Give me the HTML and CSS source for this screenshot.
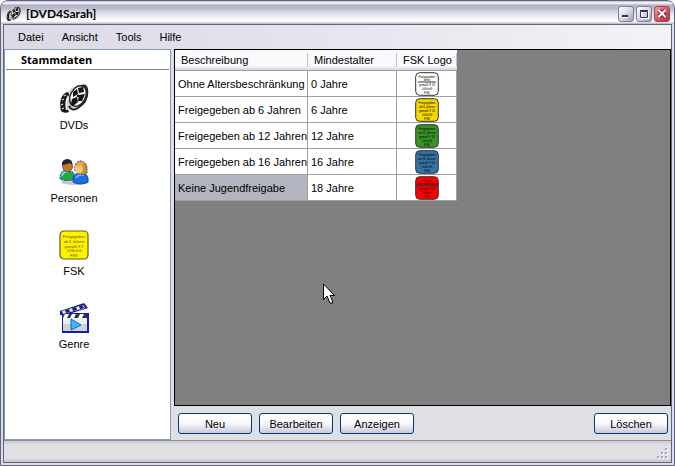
FILE: index.html
```html
<!DOCTYPE html>
<html lang="de">
<head>
<meta charset="utf-8">
<title>DVD4Sarah</title>
<link rel="stylesheet" href="styles.css">
</head>
<body>
<div class="window">
  <header class="titlebar">
    <svg class="app-icon" viewBox="0 0 32 32" aria-hidden="true"><use href="#reel"/></svg>
    <h1 class="title">[DVD4Sarah]</h1>
    <div class="captions">
      <button class="caption" aria-label="Minimieren"><svg viewBox="0 0 14 14"><path d="M4 9h5v2H4z" fill="#fff"/><path d="M3 8h6v2H3z" fill="#34344c"/></svg></button>
      <button class="caption" aria-label="Maximieren"><svg viewBox="0 0 14 14"><path d="M4 4h7v7H4z" fill="none" stroke="#fff" stroke-width="2"/><path d="M3.5 4.5h7v6h-7zM3 3.5h8" fill="none" stroke="#34344c"/></svg></button>
      <button class="caption caption-close" aria-label="Schließen"><svg viewBox="0 0 14 14"><path d="M4 3.5l6 6m0-6l-6 6" stroke="#7a2030" stroke-width="4"/><path d="M3.5 3l7 7m0-7l-7 7" stroke="#fff" stroke-width="2"/></svg></button>
    </div>
  </header>
  <div class="client">
    <nav class="menu" aria-label="Menü">
      <button>Datei</button><button>Ansicht</button><button>Tools</button><button>Hilfe</button>
    </nav>
    <div class="main">
      <aside class="sidebar">
        <h2>Stammdaten</h2>
        <ul>
          <li><a href="#dvds">
            <svg viewBox="0 0 32 32" aria-hidden="true">
              <g id="reel">
                <path d="M2 17Q3 9 11 8Q14 2 23 2Q30 2 30 9Q30 20 22 24Q17 27 12 25Q12 28 8 30L3 28Q1 23 2 17" fill="#d8d8d8"/>
                <path d="M3 28Q0 14 9 9Q12 10 11 15Q7 23 11 29Q6 31 3 28" fill="#161616"/>
                <path d="M8 27Q6 18 10 12Q12 14 10 18Q8 23 10 27z" fill="#f4f4f4"/>
                <path d="M4 26l2-1M3 22l2-1M4 17l2-1M6 13l2-1" fill="none" stroke="#ddd" stroke-width="1.2"/>
                <path d="M11 23Q14 29 20 25Q31 18 29 6Q28 1 23 3" fill="none" stroke="#222" stroke-width="2"/>
                <ellipse cx="20" cy="13" rx="7.5" ry="11" transform="rotate(28 20 13)" fill="#f4f4f4" stroke="#252525" stroke-width="1.5"/>
                <path d="M20 5l5-1 1 5-5 1zM15 9l4-3 1 5-5 3zM21 12l6-1-3 7-4 0zM14 16l5-2 1 5-5 4-2-2z" fill="#111"/>
                <circle cx="20" cy="13" r="1.2"/>
              </g>
            </svg><span>DVDs</span></a></li>
          <li><a href="#personen">
            <svg viewBox="0 0 32 32" aria-hidden="true">
              <ellipse cx="17" cy="26" rx="14" ry="3" fill="#c4c6cc"/>
              <path d="M2 23Q2 14 9 14Q17 14 17 23Q9 26 2 23" fill="#22aa3c" stroke="#2336c4" stroke-dasharray="2 1"/>
              <path d="M4 20Q5 15 10 16" fill="none" stroke="#80e488" stroke-width="2"/>
              <ellipse cx="9.500" cy="10" rx="5" ry="6" fill="#c47824" stroke="#2336c4" stroke-width=".7"/>
              <path d="M4 9Q3 4 9 3Q15 3 14 9L12 7Q8 9 4 9" fill="#26262a"/>
              <path d="M15 26Q14 17 23 17Q31 17 30 26Q22 30 15 26" fill="#1670dc" stroke="#2336c4"/>
              <path d="M18 22Q20 18 26 19" fill="none" stroke="#68b5ff" stroke-width="2"/>
              <path d="M17 15Q16 5 23 5Q30 6 29 17Q25 20 20 17" fill="#d88c18" stroke="#2336c4" stroke-dasharray="2 1"/>
              <ellipse cx="21" cy="12.500" rx="4" ry="5" fill="#ffc780"/>
              <path d="M17 10Q20 4 26 7Q25 10 17 11" fill="#f0ad30"/>
            </svg><span>Personen</span></a></li>
          <li><a href="#fsk">
            <svg viewBox="0 0 32 32" aria-hidden="true">
              <rect x="2" y="2" width="28" height="28" rx="4" fill="#fff200" stroke="#665f12" stroke-width="1.200"/>
              <g class="seal-text"><text x="16" y="9">Freigegeben</text><text x="16" y="14">ab 6 Jahren</text><text x="16" y="19">gemäß § 7</text><text x="16" y="23">JÖSchG</text><text x="16" y="28">FSK</text></g>
            </svg><span>FSK</span></a></li>
          <li><a href="#genre">
            <svg viewBox="0 0 32 32" aria-hidden="true">
              <path d="M2 9L26 1 30 6 14 11H31V31H4V13H2Z" fill="#111cba"/>
              <path d="M4 9L25 3 27 6 5 12Z" fill="#e8e8e8"/>
              <path d="M7 8l4-1 1 3-4 1zM14 6l4-1 1 3-4 1zM21 4l3-1 2 3-4 1z" fill="#26262b"/>
              <path d="M5 12h24v17H5z" fill="#eceff3"/>
              <path d="M5 12h24v4H5z" fill="#333"/>
              <path d="M7 12h4l-2 4H5zM14 12h4l-2 4h-4zM22 12h4l-2 4h-4z" fill="#fff"/>
              <path d="M5 22h24v7H5z" fill="#cfd3d9"/>
              <path d="M13 17l10 6-10 5z" fill="#4ab4ff" stroke="#0865cb"/>
            </svg><span>Genre</span></a></li>
        </ul>
      </aside>
      <section class="content">
        <div class="grid-area">
          <table>
            <colgroup><col class="col-text"><col class="col-age"><col class="col-logo"></colgroup>
            <thead><tr><th scope="col"><span>Beschreibung</span></th><th scope="col"><span>Mindestalter</span></th><th scope="col"><span>FSK Logo</span></th></tr></thead>
            <tbody>
              <tr><td>Ohne Altersbeschränkung</td><td>0 Jahre</td><td><svg class="seal white" viewBox="0 0 24 24"><rect x=".7" y=".7" width="22.600" height="22.600" rx="4"/><g class="seal-text small"><text x="12" y="6">Freigegeben</text><text x="12" y="9">ohne</text><text x="12" y="14">gemäß § 14</text><text x="12" y="18">JuSchG</text><text x="12" y="22">FSK</text></g><path d="M3 10h18"/></svg></td></tr>
              <tr><td>Freigegeben ab 6 Jahren</td><td>6 Jahre</td><td><svg class="seal yellow" viewBox="0 0 24 24"><rect x=".7" y=".7" width="22.600" height="22.600" rx="4"/><g class="seal-text small"><text x="12" y="6">Freigegeben</text><text x="12" y="10">ab 6 Jahren</text><text x="12" y="14">gemäß § 14</text><text x="12" y="18">JuSchG</text><text x="12" y="22">FSK</text></g></svg></td></tr>
              <tr><td>Freigegeben ab 12 Jahren</td><td>12 Jahre</td><td><svg class="seal green" viewBox="0 0 24 24"><rect x=".7" y=".7" width="22.600" height="22.600" rx="4"/><g class="seal-text small"><text x="12" y="6">Freigegeben</text><text x="12" y="10">ab 12 Jahren</text><text x="12" y="14">gemäß § 14</text><text x="12" y="18">JuSchG</text><text x="12" y="22">FSK</text></g></svg></td></tr>
              <tr><td>Freigegeben ab 16 Jahren</td><td>16 Jahre</td><td><svg class="seal blue" viewBox="0 0 24 24"><rect x=".7" y=".7" width="22.600" height="22.600" rx="4"/><g class="seal-text small"><text x="12" y="6">Freigegeben</text><text x="12" y="10">ab 16 Jahren</text><text x="12" y="14">gemäß § 14</text><text x="12" y="18">JuSchG</text><text x="12" y="22">FSK</text></g></svg></td></tr>
              <tr><td class="selected">Keine Jugendfreigabe</td><td>18 Jahre</td><td><svg class="seal red" viewBox="0 0 24 24"><rect x=".7" y=".7" width="22.600" height="22.600" rx="4"/><g class="seal-text small"><text x="12" y="6">Keine</text><text x="12" y="9">Jugendfreigabe</text><text x="12" y="14">gemäß § 14</text><text x="12" y="18">JuSchG</text><text x="12" y="22">FSK</text></g><path d="M1 10h22"/></svg></td></tr>
            </tbody>
          </table>
          <svg class="pointer" viewBox="0 0 12 21" aria-hidden="true"><path d="M.5 1v15.500l3.500-3.500 3 7h2.500v-2l-2.500-5.500h4.500z" fill="#fff" stroke="#000"/></svg>
        </div>
        <div class="actions">
          <button>Neu</button><button>Bearbeiten</button><button>Anzeigen</button><button class="delete">Löschen</button>
        </div>
      </section>
    </div>
    <footer class="status">
      <svg viewBox="0 0 12 12" aria-hidden="true"><path d="M9 1h2v2H9zM5 5h2v2H5zM9 5h2v2H9zM1 9h2v2H1zM5 9h2v2H5zM9 9h2v2H9z" fill="#fff"/><path d="M8 0h2v2H8zM4 4h2v2H4zM8 4h2v2H8zM0 8h2v2H0zM4 8h2v2H4zM8 8h2v2H8z" fill="#a4a4ac"/></svg>
    </footer>
  </div>
</div>
</body>
</html>
```
FILE: styles.css
```css
* { box-sizing: border-box; }

body {
  margin: 0;
  background: #fff;
  color: #000;
  font: 11px/16px "Liberation Sans", Arial, sans-serif;
}

button {
  margin: 0;
  padding: 0;
  border: 0;
  background: none;
  color: inherit;
  font: inherit;
}

svg { display: block; }

.window {
  display: flex;
  flex-direction: column;
  min-height: 100vh;
  padding: 0 2px 2px;
  border: 1px solid #65647f;
  border-radius: 8px 8px 0 0;
  background: #dcdce8;
  overflow: hidden;
}

.titlebar {
  display: flex;
  align-items: center;
  height: 23px;
  margin: 0 -2px;
  padding: 3px 4px 0;
  background: linear-gradient(#b4b4ca, #fff 2px, #b2b2c8 4px, #b9b9cd 7px, #dedee8 12px, #fff 20px, #d5d5df 22px, #a6a6b8);
}

.app-icon { width: 17px; height: 16px; }

.title {
  flex: 1;
  margin: 0 0 0 4px;
  font: bold 12px/16px Lato, sans-serif;
}

.captions { display: flex; gap: 2px; }

.caption {
  display: grid;
  place-items: center;
  width: 16px;
  height: 16px;
  border: 1px solid #7c8098;
  border-radius: 3px;
  background: linear-gradient(135deg, #fff, #cfd0df 60%, #9b9eb8);
}

.caption svg { width: 14px; height: 14px; }

.caption-close {
  border-color: #a14455;
  background: linear-gradient(135deg, #efa0a0, #d34e55 60%, #b92d3d);
}

.client {
  display: flex;
  flex: 1;
  flex-direction: column;
  border: 1px solid #65647f;
  background: linear-gradient(90deg, #dad9e5, #f2f2f7);
}

.menu {
  display: flex;
  gap: 18px;
  height: 24px;
  padding: 0 14px;
}

.main { display: flex; flex: 1; }

.sidebar {
  width: 167px;
  padding: 2px 1px;
  border: 1px solid #7f9db9;
  background: #fff;
}

.sidebar h2 {
  margin: 0;
  padding: 0 0 1px 15px;
  border-bottom: 1px solid #858585;
  font: bold 11px/16px "Open Sans", sans-serif;
}

.sidebar ul {
  display: grid;
  gap: 23px;
  width: 136px;
  margin: 0;
  padding: 13px 0 0;
  list-style: none;
}

.sidebar a {
  display: flex;
  flex-direction: column;
  align-items: center;
  gap: 2px;
  color: inherit;
  text-decoration: none;
}

.sidebar a svg { width: 32px; height: 32px; }

.seal-text {
  fill: #5c5604;
  font: 4px "Liberation Sans", sans-serif;
  text-anchor: middle;
}

.seal-text.small { fill: #000; font-size: 3px; }

.content {
  display: flex;
  flex: 1;
  flex-direction: column;
  margin-left: 3px;
}

.grid-area {
  position: relative;
  flex: 1;
  border: 1px solid #000;
  background: #808080;
}

table {
  width: 282px;
  border-spacing: 0;
  table-layout: fixed;
}

.col-text { width: 133px; }
.col-age { width: 89px; }
.col-logo { width: 60px; }

th {
  height: 21px;
  padding: 0;
  border-bottom: 1px solid #a0a0a8;
  background: linear-gradient(#fafafd, #fafafd 16px, #d2d2df);
  font-weight: normal;
  text-align: left;
}

th span {
  display: block;
  height: 14px;
  padding: 0 6px;
  border-right: 1px solid #c0c0d0;
  line-height: 14px;
  white-space: nowrap;
}

td {
  height: 26px;
  padding: 0 3px;
  border-right: 1px solid #a0a0a4;
  border-bottom: 1px solid #a0a0a4;
  background: #fff;
  white-space: nowrap;
}

td.selected { background: #b2b4bf; }

.seal {
  width: 24px;
  height: 24px;
  margin: 0 auto;
  stroke: #333;
  stroke-width: 1;
}

.seal text { stroke: none; }
.white { fill: #fff; }
.yellow { fill: #f5d800; }
.green { fill: #389427; }
.blue { fill: #34739f; }
.red { fill: #f00; }

.pointer {
  position: absolute;
  top: 233px;
  left: 148px;
  width: 12px;
  height: 21px;
}

.actions {
  display: flex;
  gap: 7px;
  padding: 7px 3px 6px 4px;
  background: #e0dfe3;
}

.actions button {
  width: 74px;
  height: 21px;
  border: 1px solid #003c74;
  border-radius: 3px;
  background: linear-gradient(#fff, #f8f8fb 50%, #c9c8da);
}

.actions .delete { margin-left: auto; }

.status {
  display: flex;
  align-items: flex-end;
  justify-content: flex-end;
  height: 22px;
  padding: 2px;
  border-top: 1px solid #8c8c94;
  background: linear-gradient(#cacad0, #dfdfe4 4px, #dfdfe4 17px, #c6c6cd);
}

.status svg { width: 12px; height: 12px; }
```
